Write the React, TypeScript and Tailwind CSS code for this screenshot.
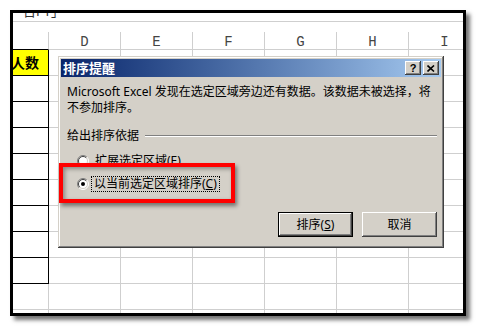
import React from "react"

const ui = "font-[family-name:'Noto_Sans','Noto_Sans_CJK_SC',sans-serif]"
const widths = ["w-[36px]", "w-[72px]", "w-[72px]", "w-[72px]", "w-[72px]", "w-[72px]", "w-[72px]"]
const letters = ["", "D", "E", "F", "G", "H", "I"]

function Radio({ checked }: { checked?: boolean }) {
    return (
        <svg width="12" height="12" viewBox="0 0 12 12" className="shrink-0">
            <circle cx="6" cy="6" r="5" fill="#fff" />
            <path d="M9.9 2.1 A5.5 5.5 0 0 0 2.1 9.9" fill="none" stroke="#808080" strokeWidth="1" />
            <path d="M9.2 2.8 A4.5 4.5 0 0 0 2.8 9.2" fill="none" stroke="#404040" strokeWidth="1" />
            <path d="M9.9 2.1 A5.5 5.5 0 0 1 2.1 9.9" fill="none" stroke="#ffffff" strokeWidth="1" />
            <path d="M9.2 2.8 A4.5 4.5 0 0 1 2.8 9.2" fill="none" stroke="#d4d0c8" strokeWidth="1" />
            {checked && <circle cx="6" cy="6" r="2" fill="#000" />}
        </svg>
    )
}

function TitleButton({ children }: { children: React.ReactNode }) {
    return (
        <div className="w-[16px] h-[14px] bg-[#d4d0c8] flex items-center justify-center shadow-[inset_-1px_-1px_#404040,inset_1px_1px_#ffffff,inset_-2px_-2px_#808080]">
            {children}
        </div>
    )
}

function PushButton({ children, isDefault }: { children: React.ReactNode, isDefault?: boolean }) {
    return (
        <div
            className={
                isDefault
                    ? "w-[75px] h-[25px] border border-black bg-[#d4d0c8] flex items-center justify-center text-[12px] text-black shadow-[inset_-1px_-1px_#404040,inset_1px_1px_#ffffff,inset_-2px_-2px_#808080]"
                    : "w-[75px] h-[25px] bg-[#d4d0c8] flex items-center justify-center text-[12px] text-black shadow-[inset_-1px_-1px_#404040,inset_1px_1px_#ffffff,inset_-2px_-2px_#808080]"
            }
        >
            {children}
        </div>
    )
}

function Sheet() {
    const rows = Array.from({ length: 10 }, (_, i) => i)
    return (
        <div className={`flex flex-col ${ui}`}>
            {/* clipped row above the headers */}
            <div className="h-[9px] border-b border-[#cfcfcf] overflow-hidden pl-[10px]">
                <div className="-mt-[10px] text-[13px] leading-[16px] text-[#333]">日PT」</div>
            </div>
            <div className="h-[10px]" />
            {/* column headers */}
            <div className="flex h-[18px]">
                {widths.map((w, i) => (
                    <div
                        key={i}
                        className={`${w} shrink-0 border-r ${i === 0 ? "border-b border-b-black border-r-[#cfcfcf]" : "border-b border-[#cfcfcf]"} flex items-center justify-center pt-[3px] font-[family-name:'Liberation_Mono',monospace] text-[14px] text-[#444]`}
                    >
                        {letters[i]}
                    </div>
                ))}
            </div>
            {rows.map((r) => (
                <div key={r} className="flex h-[26px]">
                    {widths.map((w, i) => (
                        <div
                            key={i}
                            className={
                                i === 0
                                    ? `${w} shrink-0 border-r border-b overflow-hidden ${r < 9 ? "border-black" : "border-[#cfcfcf]"} ${r === 0 ? "bg-[#ffff00] flex items-center justify-end pr-[9px] text-[14px] font-bold text-black whitespace-nowrap" : ""}`
                                    : `${w} shrink-0 border-r border-b border-[#cfcfcf]`
                            }
                        >
                            {i === 0 && r === 0 ? "人数" : null}
                        </div>
                    ))}
                </div>
            ))}
            <div className="flex h-[6px]">
                {widths.map((w, i) => (
                    <div key={i} className={`${w} shrink-0 border-r border-[#cfcfcf]`} />
                ))}
            </div>
        </div>
    )
}

function SortDialog() {
    return (
        <div className={`absolute left-[45px] top-[43px] w-[386px] h-[192px] bg-[#d4d0c8] p-[3px] flex flex-col shadow-[inset_-1px_-1px_#404040,inset_1px_1px_#d4d0c8,inset_-2px_-2px_#808080,inset_2px_2px_#ffffff] ${ui}`}>
            <div className="h-[18px] flex items-center justify-between pl-[2px] pr-[2px] bg-linear-to-r from-[#0a246a] to-[#a6caf0]">
                <span className="text-white font-bold text-[13px] leading-none">排序提醒</span>
                <div className="flex">
                    <TitleButton>
                        <span className="text-[11px] font-bold leading-none text-black font-[family-name:'Liberation_Sans',sans-serif]">?</span>
                    </TitleButton>
                    <div className="w-[2px]" />
                    <TitleButton>
                        <svg width="8" height="7" viewBox="0 0 8 7">
                            <path d="M0.5 0.5 L7 6.5 M7 0.5 L0.5 6.5" stroke="#000" strokeWidth="1.6" />
                        </svg>
                    </TitleButton>
                </div>
            </div>
            <div className="pl-[6px] pr-[4px] pt-[7px] flex flex-col text-[12px] leading-[16px] text-black">
                <p>Microsoft Excel 发现在选定区域旁边还有数据。该数据未被选择，将</p>
                <p>不参加排序。</p>
                <div className="mt-[12px] flex items-center gap-[6px]">
                    <span>给出排序依据</span>
                    <div className="flex-1 flex flex-col">
                        <div className="h-px bg-[#808080]" />
                        <div className="h-px bg-white" />
                    </div>
                </div>
                <div className="mt-[9px] ml-[10px] flex items-center gap-[4px] h-[16px]">
                    <Radio />
                    <span className="px-[2px]">扩展选定区域(<span className="underline">E</span>)</span>
                </div>
                <div className="mt-[7px] ml-[10px] flex items-center gap-[2px] h-[16px]">
                    <Radio checked />
                    <span className="px-[2px] border border-dotted border-black leading-[14px]">以当前选定区域排序(<span className="underline">C</span>)</span>
                </div>
                <div className="mt-[20px] flex justify-end gap-[9px]">
                    <PushButton isDefault>排序(<span className="underline">S</span>)</PushButton>
                    <PushButton>取消</PushButton>
                </div>
            </div>
        </div>
    )
}

export default function App() {
    return (
        <div className="w-[477px] h-[327px] bg-white pt-[10px] pl-[10px]">
            <div className="relative w-[456px] h-[306px] border-[3px] border-black bg-white overflow-hidden shadow-[4px_4px_4px_rgba(0,0,0,0.55)]">
                <Sheet />
                <SortDialog />
                {/* red annotation box */}
                <div className="absolute left-[46px] top-[150px] w-[176px] h-[40px] border-[4px] border-[#ff0000] shadow-[2px_3px_4px_rgba(0,0,0,0.45),inset_2px_2px_4px_rgba(0,0,0,0.35)]" />
            </div>
        </div>
    )
}
